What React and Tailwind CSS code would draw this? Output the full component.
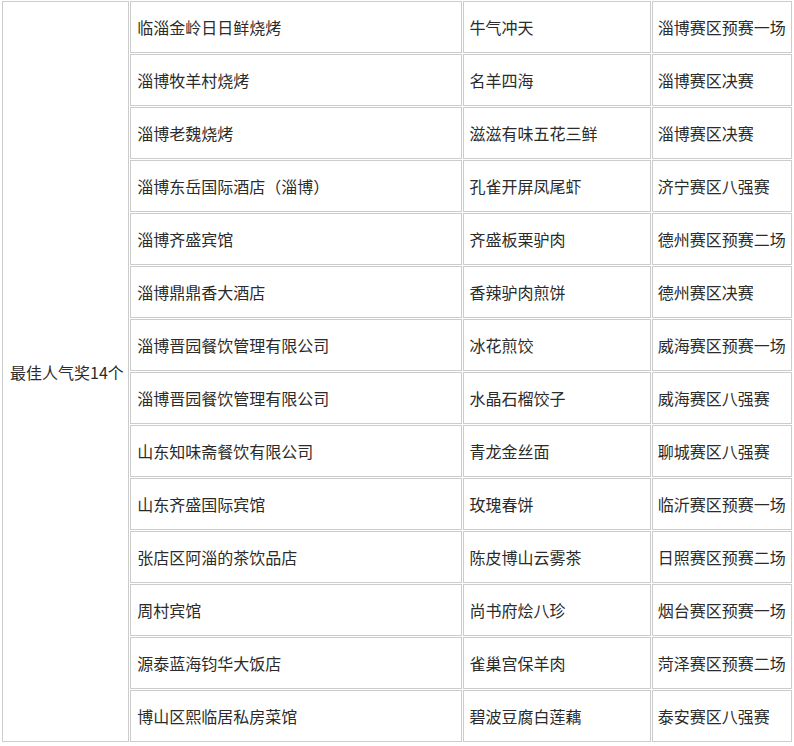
const rows = [
  ['临淄金岭日日鲜烧烤', '牛气冲天', '淄博赛区预赛一场'],
  ['淄博牧羊村烧烤', '名羊四海', '淄博赛区决赛'],
  ['淄博老魏烧烤', '滋滋有味五花三鲜', '淄博赛区决赛'],
  ['淄博东岳国际酒店（淄博）', '孔雀开屏凤尾虾', '济宁赛区八强赛'],
  ['淄博齐盛宾馆', '齐盛板栗驴肉', '德州赛区预赛二场'],
  ['淄博鼎鼎香大酒店', '香辣驴肉煎饼', '德州赛区决赛'],
  ['淄博晋园餐饮管理有限公司', '冰花煎饺', '威海赛区预赛一场'],
  ['淄博晋园餐饮管理有限公司', '水晶石榴饺子', '威海赛区八强赛'],
  ['山东知味斋餐饮有限公司', '青龙金丝面', '聊城赛区八强赛'],
  ['山东齐盛国际宾馆', '玫瑰春饼', '临沂赛区预赛一场'],
  ['张店区阿淄的茶饮品店', '陈皮博山云雾茶', '日照赛区预赛二场'],
  ['周村宾馆', '尚书府烩八珍', '烟台赛区预赛一场'],
  ['源泰蓝海钧华大饭店', '雀巢宫保羊肉', '菏泽赛区预赛二场'],
  ['博山区熙临居私房菜馆', '碧波豆腐白莲藕', '泰安赛区八强赛'],
]

const cell = 'h-[52px] border border-[#cccccc] py-0 align-middle'

export default function App() {
  return (
    <div className="h-[746px] w-[794px] overflow-hidden bg-white pl-px font-['Noto_Sans_CJK_SC',sans-serif] text-[16px] leading-[20px] text-[#2b2b2b]">
      <table className="w-[792px] table-fixed border-separate border-spacing-[1px]">
        <colgroup>
          <col className="w-[127px]" />
          <col className="w-[331px]" />
          <col className="w-[188px]" />
          <col className="w-[140px]" />
        </colgroup>
        <tbody>
          {rows.map((row, i) => (
            <tr key={i}>
              {i === 0 ? (
                <td rowSpan={rows.length} className={`${cell} pl-[7px] pr-0 whitespace-nowrap`}>
                  最佳人气奖14个
                </td>
              ) : null}
              <td className={`${cell} pl-[6px] pr-1`}>{row[0]}</td>
              <td className={`${cell} pl-[6px] pr-1`}>{row[1]}</td>
              <td className={`${cell} pl-[5px] pr-0 whitespace-nowrap`}>{row[2]}</td>
            </tr>
          ))}
        </tbody>
      </table>
    </div>
  )
}
